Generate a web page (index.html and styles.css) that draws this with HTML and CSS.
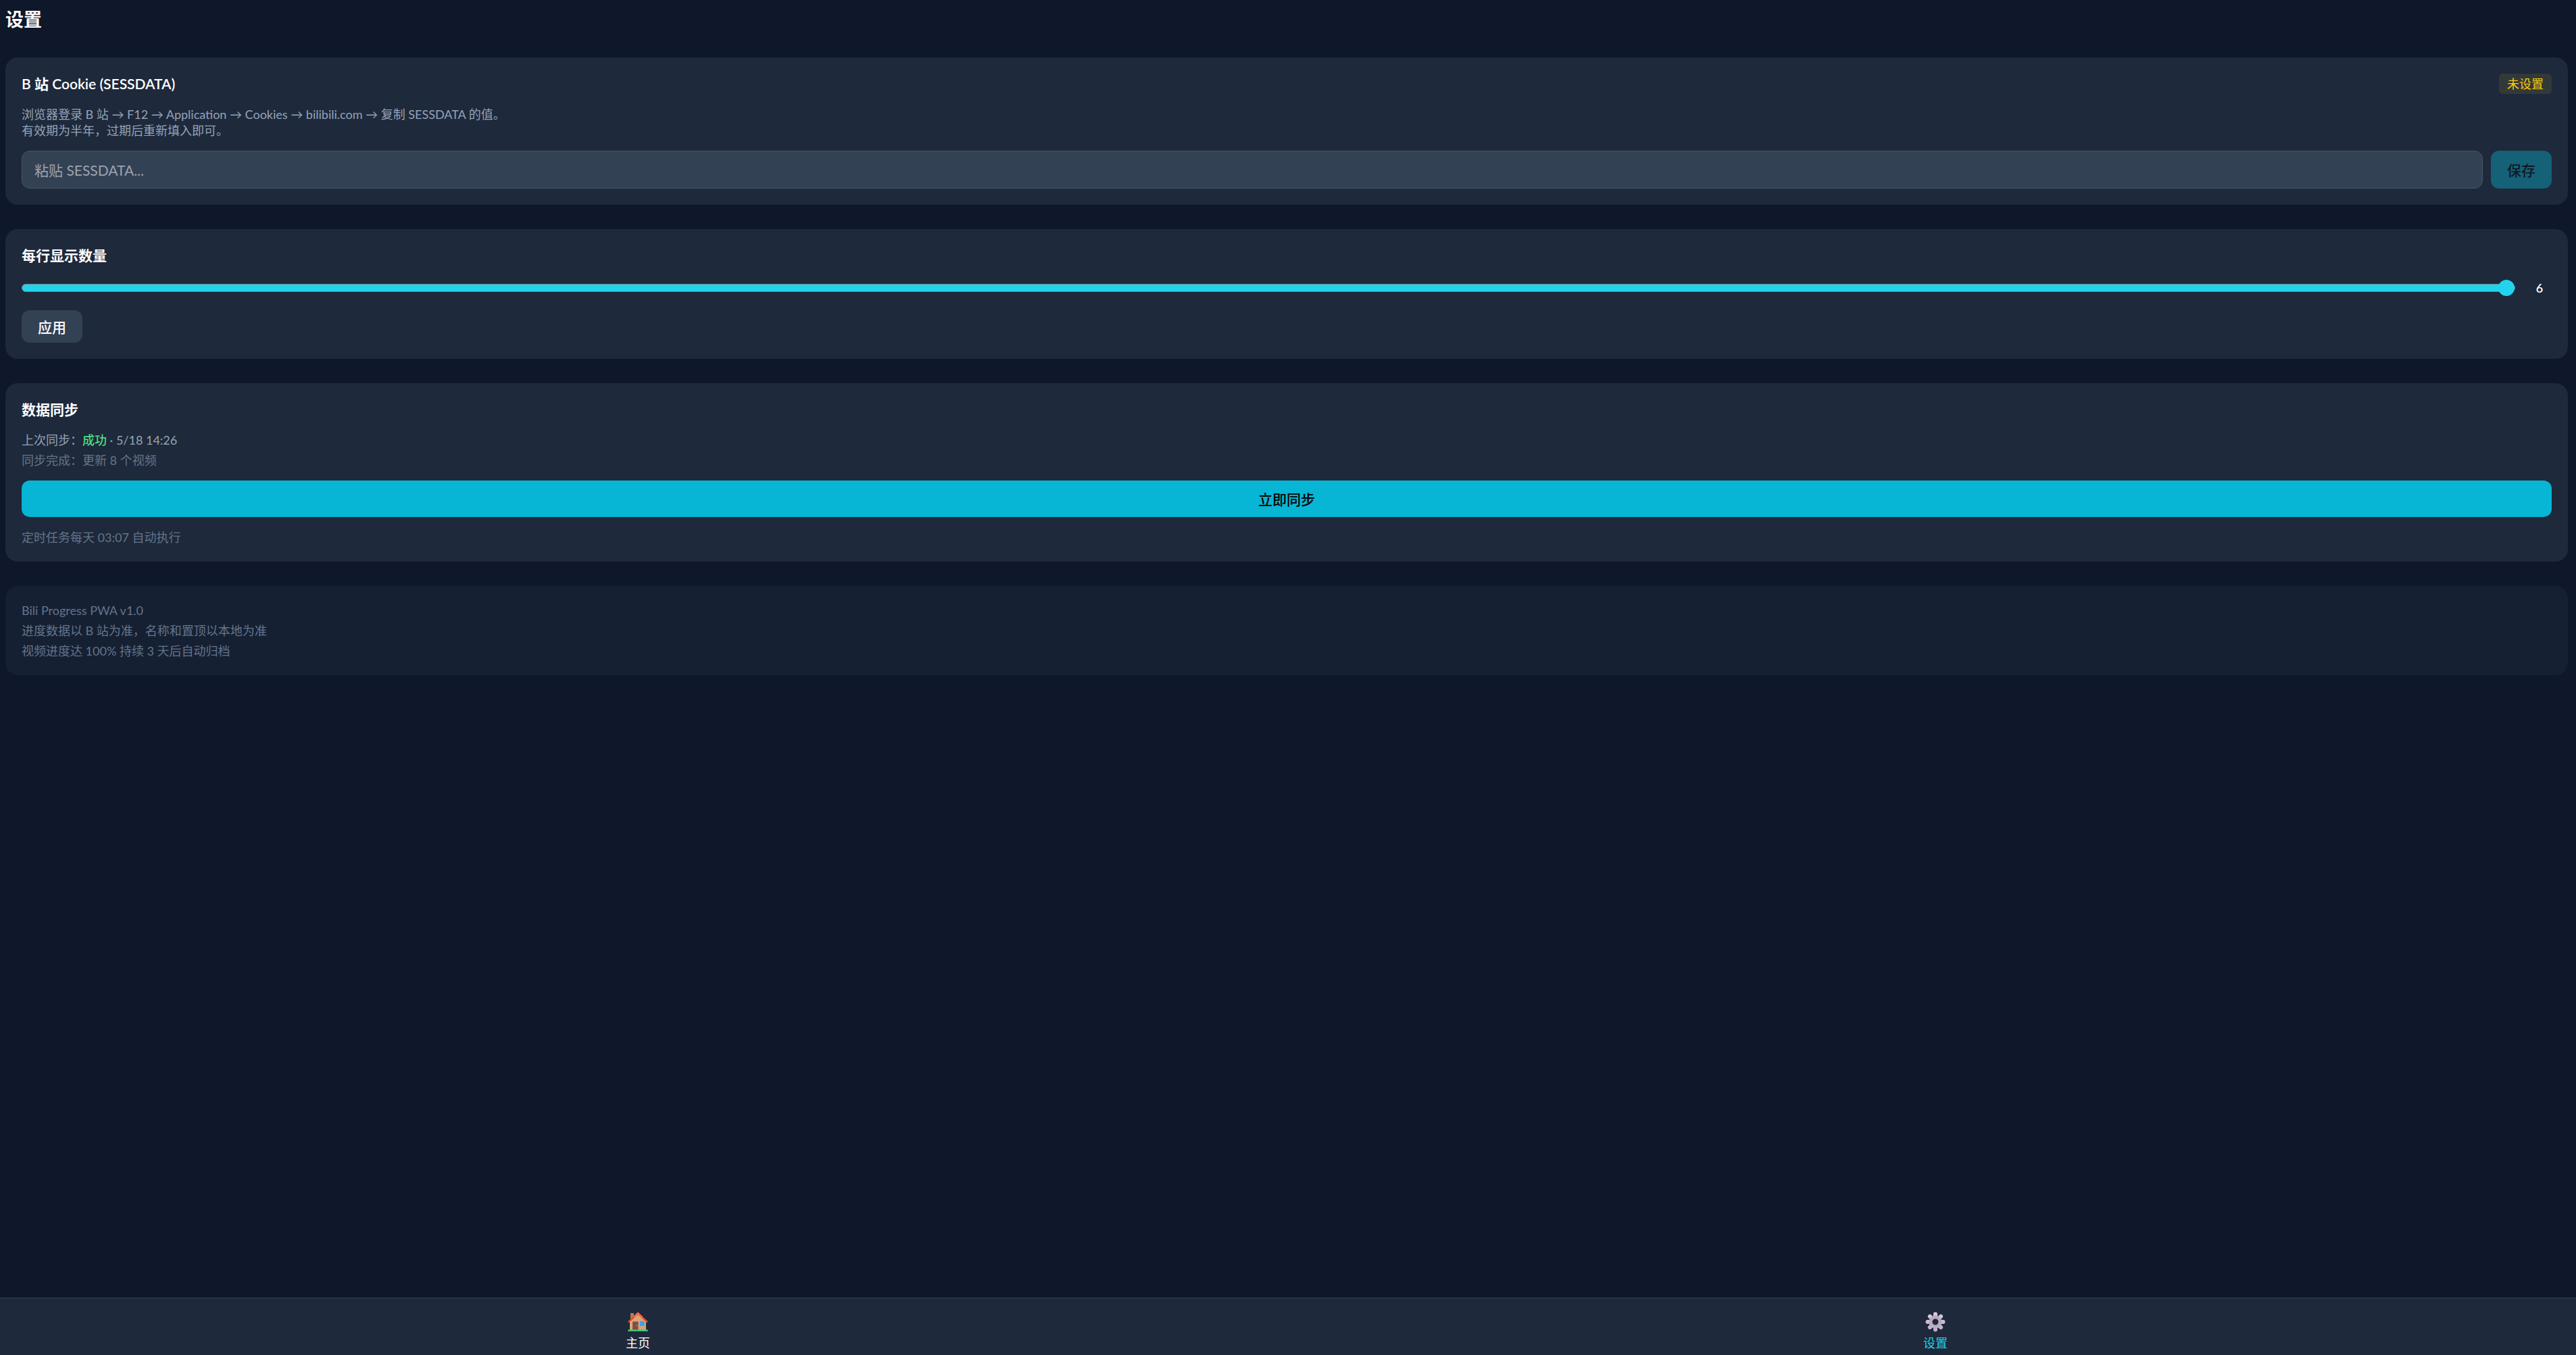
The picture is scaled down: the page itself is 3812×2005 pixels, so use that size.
FILE: index.html
```html
<!DOCTYPE html>
<html lang="zh-CN">
<head>
  <meta charset="UTF-8">
  <meta name="viewport" content="width=device-width, initial-scale=1">
  <title>设置</title>
  <link rel="stylesheet" href="styles.css">
</head>
<body>

<main class="page">
  <h1 class="page_title">设置</h1>

  <form class="card">
    <div class="card_head">
      <h2 class="card_title"><label for="sessdata">B 站 Cookie (SESSDATA)</label></h2>
      <span class="badge">未设置</span>
    </div>
    <p class="desc">浏览器登录 B 站 → F12 → Application → Cookies → bilibili.com → 复制 SESSDATA 的值。<br>有效期为半年，过期后重新填入即可。</p>
    <div class="cookie_row">
      <input class="text_input" type="text" id="sessdata" name="sessdata" placeholder="粘贴 SESSDATA...">
      <button class="btn btn-save" type="submit" disabled>保存</button>
    </div>
  </form>

  <section class="card">
    <h2 class="card_title"><label for="columns">每行显示数量</label></h2>
    <div class="range_row">
      <input class="range" type="range" id="columns" name="columns" min="1" max="6" value="6">
      <output class="range_value" for="columns">6</output>
    </div>
    <button class="btn btn-apply" type="button">应用</button>
  </section>

  <section class="card">
    <h2 class="card_title">数据同步</h2>
    <div class="lines">
      <p class="status">上次同步：<span class="status_ok">成功</span> · 5/18 14:26</p>
      <p>同步完成：更新 8 个视频</p>
    </div>
    <button class="btn btn-sync" type="button">立即同步</button>
    <p class="note">定时任务每天 03:07 自动执行</p>
  </section>

  <section class="card card-about">
    <div class="lines">
      <p>Bili Progress PWA v1.0</p>
      <p>进度数据以 B 站为准，名称和置顶以本地为准</p>
      <p>视频进度达 100% 持续 3 天后自动归档</p>
    </div>
  </section>
</main>

<nav class="nav">
  <a class="nav_item" href="#home">
    <svg class="nav_icon" viewBox="0 0 30 30" aria-hidden="true">
      <defs>
        <linearGradient id="wall" x1="0" y1="0" x2="1" y2="1">
          <stop offset="0" stop-color="#e8a878"/>
          <stop offset="1" stop-color="#c9a080"/>
        </linearGradient>
      </defs>
      <path d="M4 2h5v12H4z" fill="#b57d58"/>
      <path d="M3 14 15 3l12 11v13H3z" fill="url(#wall)"/>
      <path d="M15 .5 30 14.500l-1.500 1.800L15 4.200 1.500 16.300 0 14.500z" fill="#e8472f"/>
      <path d="M15 .5 22 7l-1.500 2L15 4.200 9.500 9 8 7z" fill="#f56a3c"/>
      <rect x="7" y="14.500" width="8.500" height="12.500" rx="1" fill="#7d5148"/>
      <circle cx="13.500" cy="20.500" r=".8" fill="#c4968a"/>
      <rect x="18" y="14" width="6.500" height="7" fill="#35a5ee"/>
      <rect x="0" y="26.500" width="30" height="2.500" rx="1.200" fill="#46c46c"/>
    </svg>
    <span>主页</span>
  </a>
  <a class="nav_item nav_item-active" href="#settings">
    <svg class="nav_icon" viewBox="0 0 30 30" aria-hidden="true">
      <defs>
        <linearGradient id="gear" gradientUnits="userSpaceOnUse" x1="0" y1="0" x2="0" y2="30">
          <stop offset="0" stop-color="#d9d0de"/>
          <stop offset="1" stop-color="#bda6cf"/>
        </linearGradient>
      </defs>
      <g stroke="url(#gear)" stroke-width="6" stroke-linecap="round">
        <path d="M15 3.500v23M3.500 15h23M6.900 6.900l16.200 16.200M23.100 6.900 6.900 23.100"/>
      </g>
      <circle cx="15" cy="15" r="7" fill="#1e293b" stroke="#b9abc0" stroke-width="5"/>
    </svg>
    <span>设置</span>
  </a>
</nav>

</body>
</html>
```

FILE: styles.css
```css
* {
  box-sizing: border-box;
}
body {
  margin: 0;
  min-height: 100vh;
  display: flex;
  flex-direction: column;
  background-color: #0f172a;
  color: #fff;
  font-family: Lato, "Noto Sans CJK SC", sans-serif;
  font-size: 18px;
  line-height: 24px;
}
h1, h2, p {
  margin: 0;
}
input, button {
  font-family: inherit;
}

.page {
  flex: 1;
  display: flex;
  flex-direction: column;
  gap: 36px;
  padding: 9px 12px 36px 8px;
}
.page_title {
  font-size: 27px;
  line-height: 40px;
}

.card {
  display: flex;
  flex-direction: column;
  gap: 18px;
  padding: 24px;
  border-radius: 18px;
  background-color: #1e293b;
  color: #64748b;
}
.card-about {
  background-color: rgba(30, 41, 59, .5);
}
.card_head {
  display: flex;
  align-items: center;
  justify-content: space-between;
}
.card_title {
  color: #fff;
  font-size: 21px;
  font-weight: 600;
  line-height: 30px;
}
.badge {
  padding: 3px 12px;
  border-radius: 6px;
  background-color: rgba(250, 204, 21, .1);
  color: #facc15;
}
.desc,
.status {
  color: #94a3b8;
}
.status_ok {
  color: #4ade80;
  font-weight: 500;
}
.lines {
  display: flex;
  flex-direction: column;
  gap: 6px;
}

.cookie_row {
  display: flex;
  gap: 12px;
}
.text_input {
  flex: 1;
  height: 56px;
  padding: 0 18px;
  border: 1px solid #475569;
  border-radius: 12px;
  background-color: #334155;
  color: #fff;
  font-size: 21px;
}
.text_input::placeholder {
  color: #9ca3af;
}
.btn {
  padding: 0 24px;
  border: none;
  border-radius: 12px;
  font-size: 21px;
  font-weight: 500;
}
.btn-save {
  background-color: #06b6d4;
  color: #000;
  opacity: .4;
}
.btn-apply {
  align-self: flex-start;
  height: 48px;
  background-color: #334155;
  color: #fff;
}
.btn-sync {
  height: 54px;
  background-color: #06b6d4;
  color: #000;
}

.range_row {
  display: flex;
  align-items: center;
  gap: 18px;
  height: 30px;
}
.range {
  flex: 1;
  height: 24px;
  margin: 0;
  appearance: none;
  background: none;
}
.range::-webkit-slider-runnable-track {
  height: 12px;
  border: 1px solid #808080;
  border-radius: 6px;
  background-color: #22d3ee;
}
.range::-webkit-slider-thumb {
  width: 24px;
  height: 24px;
  margin-top: -7px;
  appearance: none;
  border-radius: 50%;
  background-color: #22d3ee;
}
.range_value {
  width: 36px;
  color: #fff;
  font-weight: 600;
  text-align: center;
}

.nav {
  display: grid;
  grid-template-columns: 1fr 1fr;
  gap: 32px;
  padding: 20px 4px 6px 0;
  border-top: 1px solid #334155;
  background-color: #1e293b;
}
.nav_item {
  display: flex;
  flex-direction: column;
  align-items: center;
  gap: 4px;
  color: #fff;
  text-decoration: none;
}
.nav_item-active {
  color: #22d3ee;
}
.nav_icon {
  width: 30px;
  height: 30px;
}
```
